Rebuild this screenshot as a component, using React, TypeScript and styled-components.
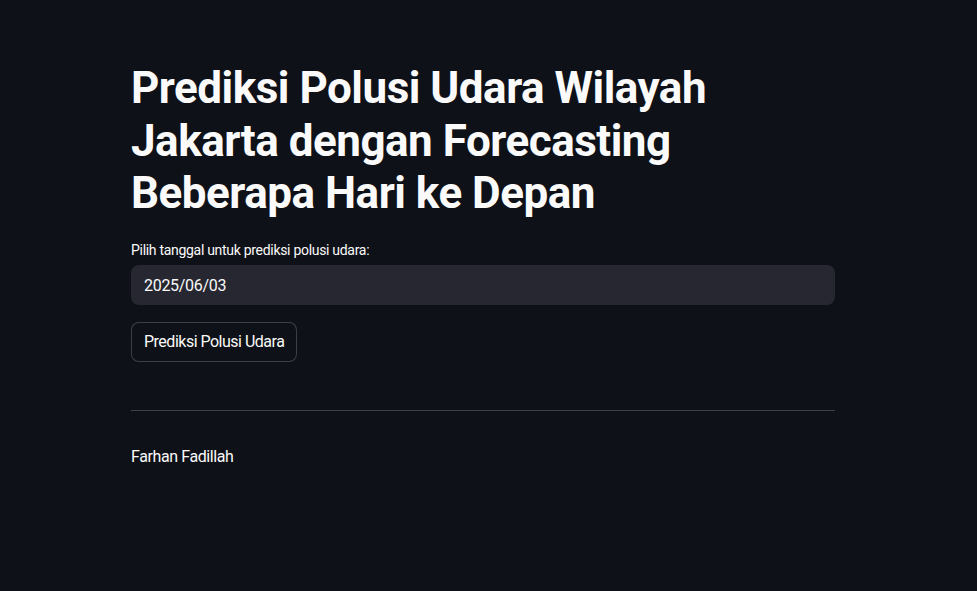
import React from 'react';
import styled, { createGlobalStyle } from 'styled-components';

const GlobalStyle = createGlobalStyle`
  html, body {
    margin: 0;
    padding: 0;
    background: #0e1117;
  }
  body {
    font-family: Roboto, "Noto Sans", sans-serif;
    color: #fafafa;
  }
`;

const Page = styled.main`
  min-height: 591px;
  padding: 62px 0 0 131px;
  box-sizing: border-box;
`;

const Content = styled.div`
  width: 704px;
  display: flex;
  flex-direction: column;
`;

const Title = styled.h1`
  margin: 0;
  font-size: 44px;
  font-weight: 700;
  line-height: 52.5px;
  letter-spacing: -0.5px;
  color: #fafafa;
  padding-right: 110px;
`;

const Field = styled.div`
  margin-top: 20px;
  display: flex;
  flex-direction: column;
  gap: 4px;
`;

const Label = styled.label`
  font-size: 14px;
  line-height: 21px;
  letter-spacing: -0.3px;
  color: #fafafa;
`;

const DateInput = styled.div`
  height: 40px;
  background: #262730;
  border-radius: 8px;
  display: flex;
  align-items: center;
  padding: 2px 13px 0;
  box-sizing: border-box;
  font-size: 16px;
  letter-spacing: -0.3px;
`;

const Button = styled.button`
  margin-top: 17px;
  align-self: flex-start;
  height: 40px;
  padding: 0 12px;
  border-radius: 8px;
  border: 1px solid rgba(250, 250, 250, 0.2);
  background: #0e1117;
  color: #fafafa;
  font-family: inherit;
  font-size: 16px;
  letter-spacing: -0.5px;
  cursor: pointer;
`;

const Divider = styled.hr`
  margin: 48px 0 0;
  border: none;
  height: 1px;
  background: rgba(250, 250, 250, 0.2);
`;

const Author = styled.p`
  margin: 34px 0 0;
  font-size: 16px;
  line-height: 24px;
  letter-spacing: -0.4px;
`;

export default function App() {
  return (
    <>
      <GlobalStyle />
      <Page>
        <Content>
          <Title>Prediksi Polusi Udara Wilayah Jakarta dengan Forecasting Beberapa Hari ke Depan</Title>
          <Field>
            <Label>Pilih tanggal untuk prediksi polusi udara:</Label>
            <DateInput>2025/06/03</DateInput>
          </Field>
          <Button>Prediksi Polusi Udara</Button>
          <Divider />
          <Author>Farhan Fadillah</Author>
        </Content>
      </Page>
    </>
  );
}
